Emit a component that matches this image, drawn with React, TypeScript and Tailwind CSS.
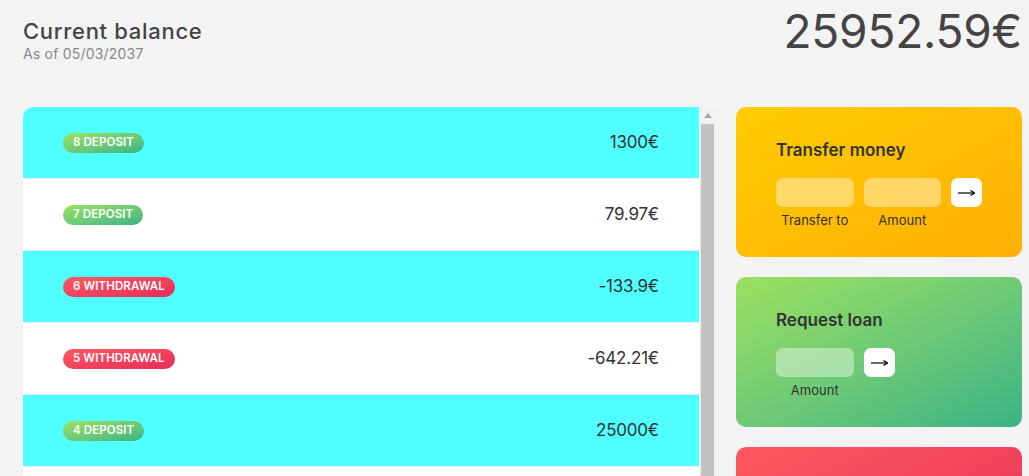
import React from "react";

type Mov = { n: number; type: "deposit" | "withdrawal"; value: string };

const movs: Mov[] = [
  { n: 8, type: "deposit", value: "1300€" },
  { n: 7, type: "deposit", value: "79.97€" },
  { n: 6, type: "withdrawal", value: "-133.9€" },
  { n: 5, type: "withdrawal", value: "-642.21€" },
  { n: 4, type: "deposit", value: "25000€" },
];

function Row({ m, i }: { m: Mov; i: number }) {
  return (
    <div
      className={
        "shrink-0 flex items-center h-[72px] border-b border-[#eeeeee] px-[40px] " +
        (i % 2 === 0 ? "bg-[#50ffff]" : "bg-white")
      }
    >
      <span
        className={
          "h-[20px] flex items-center px-[10px] rounded-full text-white text-[11.5px] font-semibold uppercase leading-none tracking-[0.1px] bg-linear-to-tl " +
          (m.type === "deposit"
            ? "from-[#39b385] to-[#9be15d]"
            : "from-[#e52a5a] to-[#ff585f]")
        }
      >
        {m.n} {m.type}
      </span>
      <span className="ml-auto text-[17px] text-[#333] tracking-[-0.2px]">{m.value}</span>
    </div>
  );
}

function Arrow() {
  return (
    <button className="h-[29px] bg-white rounded-[7px] flex items-center justify-center">
      <svg width="17" height="8" viewBox="0 0 17 8">
        <path d="M0 4 H16" stroke="#000" strokeWidth="1.2" />
        <path d="M12.5 1.5 L16.5 4 L12.5 6.5" stroke="#000" strokeWidth="1.2" fill="none" />
      </svg>
    </button>
  );
}

export default function App() {
  return (
    <div
      className="h-[476px] w-full overflow-hidden bg-[#f3f3f3] text-[#444]"
      style={{ fontFamily: "Inter, 'Noto Sans', sans-serif" }}
    >
      <div className="flex justify-between items-start h-[107px] pl-[23px] pr-[7px]">
        <div className="pt-[17px]">
          <div className="text-[22px] leading-[28px] font-medium text-[#444] tracking-[0.7px]">
            Current balance
          </div>
          <div className="text-[14px] leading-[18px] text-[#888] tracking-[0.2px]">As of 05/03/2037</div>
        </div>
        <div className="text-[46px] leading-[62px] text-[#444] tracking-[-0.2px]">25952.59€</div>
      </div>

      <div className="flex pl-[23px] gap-[20px] h-[369px]">
        <div className="w-[693px] flex h-full rounded-tl-[10px] overflow-hidden">
          <div className="flex-1 flex flex-col overflow-hidden">
            {movs.map((m, i) => (
              <Row key={m.n} m={m} i={i} />
            ))}
            <div className="shrink-0 h-[72px] bg-white" />
          </div>
          <div className="w-[17px] bg-[#f1f1f1] flex flex-col">
            <div className="h-[17px] flex items-center justify-center">
              <svg width="8" height="5" viewBox="0 0 8 5">
                <path d="M0 5 L4 0 L8 5 Z" fill="#a3a3a3" />
              </svg>
            </div>
            <div className="flex-1 mx-[2px] bg-[#c1c1c1]" />
          </div>
        </div>

        <div className="w-[286px] flex flex-col gap-[20px]">
          <div className="shrink-0 h-[150px] rounded-[10px] px-[40px] pt-[30px] bg-linear-to-tl from-[#ffb003] to-[#ffcb03] text-[#333]">
            <div className="text-[17px] leading-[26px] font-semibold mb-[15px]">Transfer money</div>
            <div className="grid grid-cols-[2.5fr_2.5fr_1fr] gap-x-[10px] gap-y-[4px]">
              <div className="h-[29px] rounded-[7px] bg-white/40" />
              <div className="h-[29px] rounded-[7px] bg-white/40" />
              <Arrow />
              <div className="text-[13px] leading-[18px] text-center">Transfer to</div>
              <div className="text-[13px] leading-[18px] text-center">Amount</div>
            </div>
          </div>

          <div className="shrink-0 h-[150px] rounded-[10px] px-[40px] pt-[30px] bg-linear-to-tl from-[#39b385] to-[#9be15d] text-[#333]">
            <div className="text-[17px] leading-[26px] font-semibold mb-[15px]">Request loan</div>
            <div className="grid grid-cols-[2.5fr_1fr_2.5fr] gap-x-[10px] gap-y-[4px]">
              <div className="h-[29px] rounded-[7px] bg-white/40" />
              <Arrow />
              <div />
              <div className="text-[13px] leading-[18px] text-center">Amount</div>
            </div>
          </div>

          <div className="shrink-0 h-[150px] rounded-[10px] bg-linear-to-tl from-[#e52a5a] to-[#ff585f]" />
        </div>
      </div>
    </div>
  );
}
